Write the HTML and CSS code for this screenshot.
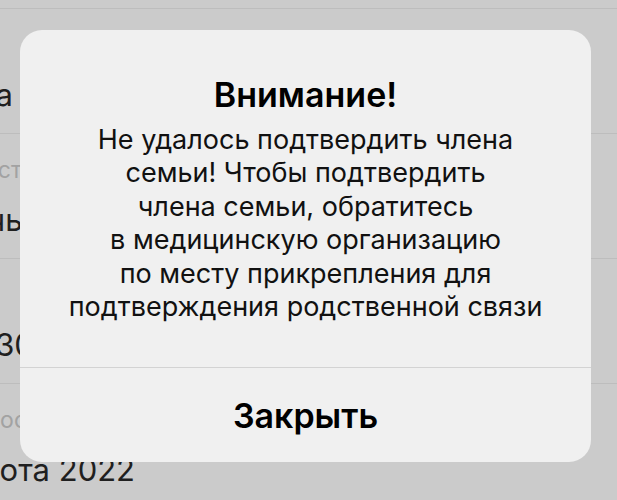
FILE: index.html
```html
<!DOCTYPE html>
<html lang="ru">
<head>
<meta charset="utf-8">
<link rel="stylesheet" href="styles.css">
</head>
<body>
<div class="list">
  <div class="row">
    <div class="label">&nbsp;</div>
    <div class="value"><span class="shift shift-a">Москва</span></div>
  </div>
  <div class="row">
    <div class="label"><span class="shift shift-st">Родство</span></div>
    <div class="value"><span class="shift shift-f">Дочь</span></div>
  </div>
  <div class="row">
    <div class="label">&nbsp;</div>
    <div class="value"><span class="shift shift-30">930</span></div>
  </div>
  <div class="row">
    <div class="label"><span class="shift shift-os">Последний осмотр</span></div>
    <div class="value"><span class="shift shift-2022">Работа 2022</span></div>
  </div>
</div>

<div class="alert">
  <div class="alert-body">
    <h1 class="alert-title">Внимание!</h1>
    <p class="alert-text">Не удалось подтвердить члена<br>семьи! Чтобы подтвердить<br>члена семьи, обратитесь<br>в медицинскую организацию<br>по месту прикрепления для<br>подтверждения родственной связи</p>
  </div>
  <div class="alert-actions">
    <button class="alert-button">Закрыть</button>
  </div>
</div>
</body>
</html>
```
FILE: styles.css
```css
html, body {
  margin: 0;
  padding: 0;
}
body {
  width: 617px;
  height: 500px;
  overflow: hidden;
  background: #cbcbcb;
  font-family: Inter, "Noto Sans", sans-serif;
  position: relative;
}
.list {
  margin-top: 8px;
}
.row {
  height: 125px;
  border-top: 1px solid #bdbdbd;
  box-sizing: border-box;
  padding-top: 23px;
  overflow: hidden;
}
.label {
  font-size: 23px;
  line-height: 26px;
  color: #a2a2a2;
  white-space: nowrap;
  display: flex;
}
.value {
  margin-top: 18px;
  font-size: 31px;
  line-height: 38px;
  color: #1f1f1f;
  white-space: nowrap;
  display: flex;
}
.shift {
  flex: none;
}
.shift-a {
  margin-left: -103px;
}
.shift-st {
  margin-left: -45px;
}
.shift-f {
  margin-left: -57px;
}
.shift-30 {
  margin-left: -24px;
}
.shift-os {
  margin-left: -17px;
}
.shift-2022 {
  margin-left: -56px;
}

.alert {
  position: absolute;
  left: 20px;
  top: 30px;
  width: 571px;
  height: 432px;
  background: #f0f0f0;
  border-radius: 22px;
  display: flex;
  flex-direction: column;
  overflow: hidden;
}
.alert-body {
  height: 338px;
  box-sizing: border-box;
  padding-top: 45px;
  text-align: center;
  border-bottom: 1px solid #d3d3d3;
}
.alert-title {
  margin: 0;
  font-size: 34px;
  line-height: 40px;
  font-weight: 600;
  color: #000;
}
.alert-text {
  margin: 8px 0 0;
  font-size: 27px;
  line-height: 33.4px;
  color: #111;
}
.alert-actions {
  flex: 1;
  display: flex;
}
.alert-button {
  flex: 1;
  border: 0;
  background: transparent;
  font-family: inherit;
  font-size: 34px;
  font-weight: 600;
  color: #000;
  padding: 0;
}
```
